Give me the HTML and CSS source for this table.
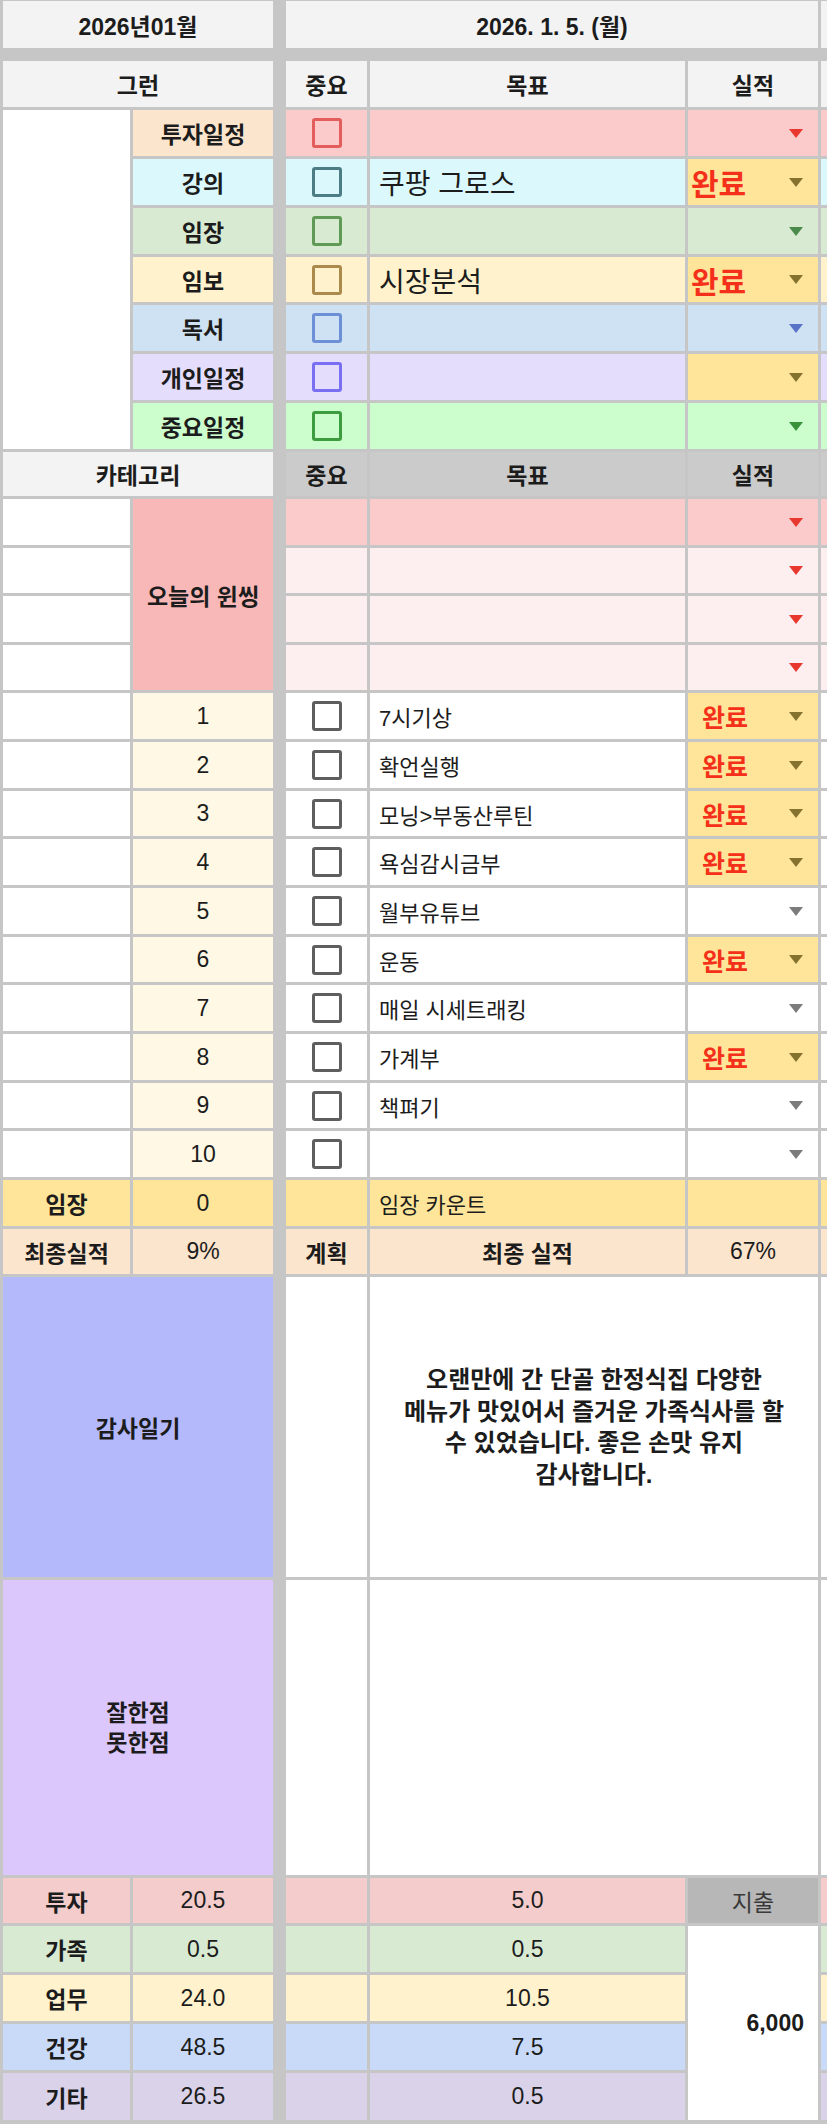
FILE: index.html
```html
<!DOCTYPE html>
<html lang="ko">
<head>
<meta charset="utf-8">
<title>2026년01월</title>
<link rel="stylesheet" href="styles.css">
</head>
<body>
<div class="sheet">
  <!-- title row -->
  <div class="c ab hdr b700">2026년01월</div>
  <div class="c ce hdr b700">2026. 1. 5. (월)</div>
  <div class="c f hdr"></div>
  <div class="spacer"></div>

  <!-- header -->
  <div class="c ab hdr b700">그런</div>
  <div class="c cc hdr b700">중요</div>
  <div class="c d hdr b700">목표</div>
  <div class="c e hdr b700">실적</div>
  <div class="c f hdr"></div>

  <!-- category rows -->
  <div class="c a rs7 white"></div>
  <div class="c b b700 bg-peach">투자일정</div>
  <div class="c cc bg-pink"><span class="box bx-red"></span></div>
  <div class="c d bg-pink"></div>
  <div class="c e sel bg-pink"><span class="arr ar-red"></span></div>
  <div class="c f bg-pink"></div>

  <div class="c b b700 bg-cyan">강의</div>
  <div class="c cc bg-cyan"><span class="box bx-teal"></span></div>
  <div class="c d left big bg-cyan">쿠팡 그로스</div>
  <div class="c e sel bg-yellow"><span class="done big">완료</span><span class="arr ar-brown"></span></div>
  <div class="c f bg-cyan"></div>

  <div class="c b b700 bg-green">임장</div>
  <div class="c cc bg-green"><span class="box bx-green"></span></div>
  <div class="c d bg-green"></div>
  <div class="c e sel bg-green"><span class="arr ar-green"></span></div>
  <div class="c f bg-green"></div>

  <div class="c b b700 bg-cream">임보</div>
  <div class="c cc bg-cream"><span class="box bx-gold"></span></div>
  <div class="c d left big bg-cream">시장분석</div>
  <div class="c e sel bg-yellow"><span class="done big">완료</span><span class="arr ar-brown"></span></div>
  <div class="c f bg-cream"></div>

  <div class="c b b700 bg-blue">독서</div>
  <div class="c cc bg-blue"><span class="box bx-blue"></span></div>
  <div class="c d bg-blue"></div>
  <div class="c e sel bg-blue"><span class="arr ar-blue"></span></div>
  <div class="c f bg-blue"></div>

  <div class="c b b700 bg-lav">개인일정</div>
  <div class="c cc bg-lav"><span class="box bx-violet"></span></div>
  <div class="c d bg-lav"></div>
  <div class="c e sel bg-yellow"><span class="arr ar-brown"></span></div>
  <div class="c f bg-lav"></div>

  <div class="c b b700 bg-mint">중요일정</div>
  <div class="c cc bg-mint"><span class="box bx-mint"></span></div>
  <div class="c d bg-mint"></div>
  <div class="c e sel bg-mint"><span class="arr ar-mint"></span></div>
  <div class="c f bg-mint"></div>

  <!-- second header -->
  <div class="c ab hdr b700">카테고리</div>
  <div class="c cc hdr2 b700">중요</div>
  <div class="c d hdr2 b700">목표</div>
  <div class="c e hdr2 b700">실적</div>
  <div class="c f hdr2"></div>

  <!-- one thing rows -->
  <div class="c a white"></div>
  <div class="c b rs4 b700 bg-win">오늘의 윈씽</div>
  <div class="c cc bg-pink"></div>
  <div class="c d bg-pink"></div>
  <div class="c e sel bg-pink"><span class="arr ar-red"></span></div>
  <div class="c f bg-pink"></div>

  <div class="c a white"></div>
  <div class="c cc bg-lpink"></div>
  <div class="c d bg-lpink"></div>
  <div class="c e sel bg-lpink"><span class="arr ar-red"></span></div>
  <div class="c f bg-lpink"></div>

  <div class="c a white"></div>
  <div class="c cc bg-lpink"></div>
  <div class="c d bg-lpink"></div>
  <div class="c e sel bg-lpink"><span class="arr ar-red"></span></div>
  <div class="c f bg-lpink"></div>

  <div class="c a white"></div>
  <div class="c cc bg-lpink"></div>
  <div class="c d bg-lpink"></div>
  <div class="c e sel bg-lpink"><span class="arr ar-red"></span></div>
  <div class="c f bg-lpink"></div>

  <!-- routine rows -->
  <div class="c a white"></div>
  <div class="c b bg-num">1</div>
  <div class="c cc white"><span class="box bx-gray"></span></div>
  <div class="c d left white">7시기상</div>
  <div class="c e sel2 bg-yellow"><span class="done">완료</span><span class="arr ar-brown"></span></div>
  <div class="c f white"></div>

  <div class="c a white"></div>
  <div class="c b bg-num">2</div>
  <div class="c cc white"><span class="box bx-gray"></span></div>
  <div class="c d left white">확언실행</div>
  <div class="c e sel2 bg-yellow"><span class="done">완료</span><span class="arr ar-brown"></span></div>
  <div class="c f white"></div>

  <div class="c a white"></div>
  <div class="c b bg-num">3</div>
  <div class="c cc white"><span class="box bx-gray"></span></div>
  <div class="c d left white">모닝&gt;부동산루틴</div>
  <div class="c e sel2 bg-yellow"><span class="done">완료</span><span class="arr ar-brown"></span></div>
  <div class="c f white"></div>

  <div class="c a white"></div>
  <div class="c b bg-num">4</div>
  <div class="c cc white"><span class="box bx-gray"></span></div>
  <div class="c d left white">욕심감시금부</div>
  <div class="c e sel2 bg-yellow"><span class="done">완료</span><span class="arr ar-brown"></span></div>
  <div class="c f white"></div>

  <div class="c a white"></div>
  <div class="c b bg-num">5</div>
  <div class="c cc white"><span class="box bx-gray"></span></div>
  <div class="c d left white">월부유튜브</div>
  <div class="c e sel2 white"><span class="arr ar-gray"></span></div>
  <div class="c f white"></div>

  <div class="c a white"></div>
  <div class="c b bg-num">6</div>
  <div class="c cc white"><span class="box bx-gray"></span></div>
  <div class="c d left white">운동</div>
  <div class="c e sel2 bg-yellow"><span class="done">완료</span><span class="arr ar-brown"></span></div>
  <div class="c f white"></div>

  <div class="c a white"></div>
  <div class="c b bg-num">7</div>
  <div class="c cc white"><span class="box bx-gray"></span></div>
  <div class="c d left white">매일 시세트래킹</div>
  <div class="c e sel2 white"><span class="arr ar-gray"></span></div>
  <div class="c f white"></div>

  <div class="c a white"></div>
  <div class="c b bg-num">8</div>
  <div class="c cc white"><span class="box bx-gray"></span></div>
  <div class="c d left white">가계부</div>
  <div class="c e sel2 bg-yellow"><span class="done">완료</span><span class="arr ar-brown"></span></div>
  <div class="c f white"></div>

  <div class="c a white"></div>
  <div class="c b bg-num">9</div>
  <div class="c cc white"><span class="box bx-gray"></span></div>
  <div class="c d left white">책펴기</div>
  <div class="c e sel2 white"><span class="arr ar-gray"></span></div>
  <div class="c f white"></div>

  <div class="c a white"></div>
  <div class="c b bg-num">10</div>
  <div class="c cc white"><span class="box bx-gray"></span></div>
  <div class="c d left white"></div>
  <div class="c e sel2 white"><span class="arr ar-gray"></span></div>
  <div class="c f white"></div>

  <!-- counters -->
  <div class="c a b700 bg-yellow">임장</div>
  <div class="c b bg-yellow">0</div>
  <div class="c cc bg-yellow"></div>
  <div class="c d left bg-yellow">임장 카운트</div>
  <div class="c e bg-yellow"></div>
  <div class="c f bg-yellow"></div>

  <div class="c a b700 bg-peach">최종실적</div>
  <div class="c b bg-peach">9%</div>
  <div class="c cc b700 bg-peach">계획</div>
  <div class="c d b700 bg-peach">최종 실적</div>
  <div class="c e bg-peach">67%</div>
  <div class="c f bg-peach"></div>

  <!-- journal -->
  <div class="c ab b700 bg-grat">감사일기</div>
  <div class="c cc white"></div>
  <div class="c de memo white">오랜만에 간 단골 한정식집 다양한<br>메뉴가 맛있어서 즐거운 가족식사를 할<br>수 있었습니다. 좋은 손맛 유지<br>감사합니다.</div>
  <div class="c f white"></div>

  <div class="c ab b700 two bg-goodbad">잘한점<br>못한점</div>
  <div class="c cc white"></div>
  <div class="c de white"></div>
  <div class="c f white"></div>

  <!-- time summary -->
  <div class="c a b700 bg-pink2">투자</div>
  <div class="c b bg-pink2">20.5</div>
  <div class="c cc bg-pink2"></div>
  <div class="c d bg-pink2">5.0</div>
  <div class="c e expense">지출</div>
  <div class="c f bg-pink2"></div>

  <div class="c a b700 bg-green">가족</div>
  <div class="c b bg-green">0.5</div>
  <div class="c cc bg-green"></div>
  <div class="c d bg-green">0.5</div>
  <div class="c e rs4 total white">6,000</div>
  <div class="c f bg-green"></div>

  <div class="c a b700 bg-cream">업무</div>
  <div class="c b bg-cream">24.0</div>
  <div class="c cc bg-cream"></div>
  <div class="c d bg-cream">10.5</div>
  <div class="c f bg-cream"></div>

  <div class="c a b700 bg-health">건강</div>
  <div class="c b bg-health">48.5</div>
  <div class="c cc bg-health"></div>
  <div class="c d bg-health">7.5</div>
  <div class="c f bg-health"></div>

  <div class="c a b700 bg-etc">기타</div>
  <div class="c b bg-etc">26.5</div>
  <div class="c cc bg-etc"></div>
  <div class="c d bg-etc">0.5</div>
  <div class="c f bg-etc"></div>
</div>
</body>
</html>
```
FILE: styles.css
```css
html, body {
  margin: 0;
  padding: 0;
  background: #ffffff;
}

.sheet {
  width: 827px;
  height: 2124px;
  box-sizing: border-box;
  overflow: hidden;
  padding: 1px 0 0 3px;
  background: #c6c6c6;
  display: grid;
  gap: 3px;
  grid-template-columns: 127px 140px 7px 81px 315px 130px 60px;
  grid-template-rows:
    47px 7px 46px
    46px 46px 46px 45px 46px 46px 46px
    44px
    46px 45px 46px 45px
    46px 46px 45px 46px 46px 45px 46px 46px 45px 46px
    46px 45px
    300px 295px
    45px 46px 46px 46px 47px;
  font-family: "Liberation Sans", "Noto Sans CJK KR", sans-serif;
  font-size: 23px;
  color: #1c1c1c;
}

.spacer { grid-column: 1 / -1; }

.c {
  display: flex;
  align-items: center;
  justify-content: center;
  min-width: 0;
  overflow: hidden;
  white-space: nowrap;
}

/* column placement */
.a  { grid-column: 1; }
.b  { grid-column: 2; }
.cc { grid-column: 4; }
.d  { grid-column: 5; }
.e  { grid-column: 6; }
.f  { grid-column: 7; }
.ab { grid-column: 1 / span 2; }
.ce { grid-column: 4 / span 3; }
.de { grid-column: 5 / span 2; }
.rs4 { grid-row: span 4; }
.rs7 { grid-row: span 7; }

.b700 { font-weight: 700; }
.left { justify-content: flex-start; padding-left: 9px; font-size: 22px; }
.big { font-size: 28px; }

/* dropdown (실적) cells */
.sel { justify-content: flex-start; padding: 0 15px 0 3px; }
.sel2 { justify-content: flex-start; padding: 0 15px 0 14px; }
.done { color: #f4301a; font-weight: 700; font-size: 25px; }
.done.big { font-size: 30px; }
.arr {
  width: 0;
  height: 0;
  margin-left: auto;
  border-left: 7px solid transparent;
  border-right: 7px solid transparent;
  border-top: 9px solid currentColor;
}
.ar-red { color: #e8372e; }
.ar-brown { color: #85722f; }
.ar-green { color: #4b8a4b; }
.ar-blue { color: #5872c8; }
.ar-mint { color: #3a933a; }
.ar-gray { color: #7c7c7c; }

/* checkboxes */
.box {
  width: 30px;
  height: 30px;
  box-sizing: border-box;
  border: 3px solid #666;
  border-radius: 3px;
}
.bx-red { border-color: #e35d5d; }
.bx-teal { border-color: #4c7d84; }
.bx-green { border-color: #5f9a57; }
.bx-gold { border-color: #ab8a4c; }
.bx-blue { border-color: #6d8fd6; }
.bx-violet { border-color: #7a6ef2; }
.bx-mint { border-color: #3d9c3d; }
.bx-gray { border-color: #5e5e5e; background: #fff; }

/* backgrounds */
.hdr { background: #f3f3f3; }
.hdr2 { background: #cbcbcb; }
.white { background: #ffffff; }
.bg-peach { background: #fce5cd; }
.bg-pink { background: #fbcaca; }
.bg-pink2 { background: #f4cccc; }
.bg-lpink { background: #fdefef; }
.bg-cyan { background: #dbf9fc; }
.bg-green { background: #d9ead3; }
.bg-cream { background: #fff2cc; }
.bg-blue { background: #cfe2f3; }
.bg-lav { background: #e4defc; }
.bg-mint { background: #ccfdcc; }
.bg-yellow { background: #ffe599; }
.bg-win { background: #f9b8b8; }
.bg-num { background: #fff8e4; }
.bg-grat { background: #b4b9fc; }
.bg-goodbad { background: #dcc7fc; }
.bg-health { background: #c9daf8; }
.bg-etc { background: #d9d2e9; }

.left.big { font-size: 28px; }

.memo {
  white-space: normal;
  text-align: center;
  font-weight: 700;
  font-size: 24px;
  line-height: 31.5px;
}
.two {
  white-space: normal;
  text-align: center;
  line-height: 30px;
}
.expense { background: #b7b7b7; color: #3a3a3a; }
.total {
  justify-content: flex-end;
  padding-right: 14px;
  font-weight: 700;
}
```
